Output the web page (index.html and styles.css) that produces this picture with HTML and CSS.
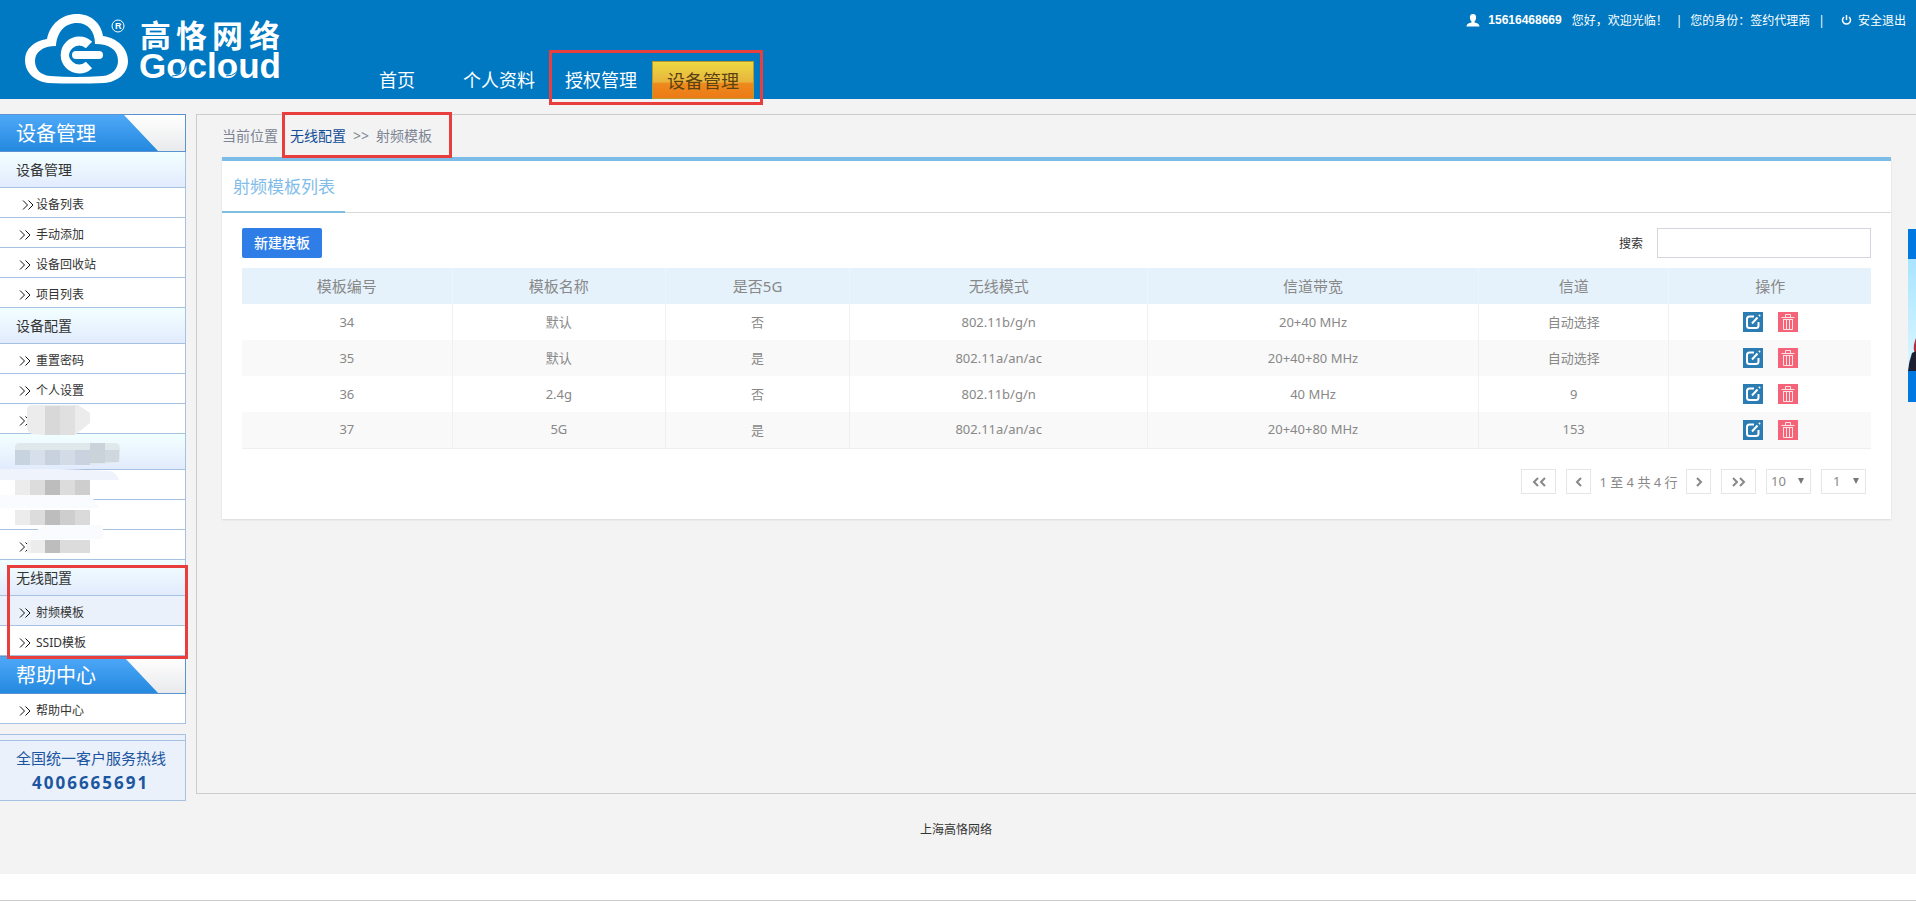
FILE: index.html
```
<!DOCTYPE html>
<html lang="zh-CN">
<head>
    <meta charset="UTF-8">
    <meta name="viewport" content="width=device-width, initial-scale=1.0">
    <title>射频模板 - 设备管理</title>
    <link rel="stylesheet" href="styles.css">
</head>
<body>
    <svg width="0" height="0" class="sprite">
        <symbol id="arrows" viewBox="0 0 12 10">
            <path d="M1 0.5 L5.5 5 L1 9.5 M6.5 0.5 L11 5 L6.5 9.5" fill="none" stroke="currentColor"/>
        </symbol>
        <symbol id="edit" viewBox="0 0 20 20">
            <rect width="20" height="20" fill="#2b7cb3"/>
            <path d="M11 4.5 H6.5 Q4 4.5 4 7 V13.5 Q4 16 6.5 16 H13 Q15.5 16 15.5 13.5 V10" fill="none" stroke="#fff" stroke-width="2"/>
            <path d="M9 11.5 L14.5 5.5 M16 4 L17 3" fill="none" stroke="#fff" stroke-width="2"/>
        </symbol>
        <symbol id="trash" viewBox="0 0 20 20">
            <rect width="20" height="20" fill="#f56379"/>
            <path d="M3.5 5.5 H16.5 M7.5 5 V2.500 H12.5 V5 M5.5 7 V17.5 H14.5 V7 M5.5 7.5 H14.5 M8.5 8 V17 M11.5 8 V17" fill="none" stroke="#fde3e6"/>
        </symbol>
    </svg>

    <div class="wrap">
        <div class="header">
            <svg class="logo" width="270" height="90" viewBox="20 5 270 90">
                <path fill="#fff" fill-rule="evenodd" d="M48 83 C34 81 25 72 25 60 C25 49 34 41 47 39 C50 24 62 14 77 14 C91 14 101 23 103 36 C118 38 128 49 128 61 C128 73 118 82 104 83 Q76 84 48 83 Z M50 76 Q76 78 103 76 C112 75 118 69 118 61 C118 50 110 44 95 44 C95 31 88 23 77 23 C65 23 57 32 56 46 C43 46 35 52 35 61 C35 69 40 75 50 76 Z"/>
                <path d="M89 45 A14 14 0 1 0 89 65" fill="none" stroke="#fff" stroke-width="9"/>
                <path d="M76 55 H99" stroke="#0079c2" stroke-width="14" stroke-linecap="round"/>
                <path d="M76 55 H99" stroke="#fff" stroke-width="8" stroke-linecap="round"/>
                <circle cx="118" cy="26" r="6" fill="none" stroke="#fff"/>
                <text class="logo-mark" x="115" y="29">R</text>
                <text class="logo-cn" x="140 176 212 249" y="47">高恪网络</text>
                <text class="logo-en" x="139" y="78">Gocloud</text>
                <path d="M172 76 Q185 76 186 63 M226 76 Q239 76 240 63" fill="none" stroke="#0079c2"/>
            </svg>
            <div class="nav">
                <a href="#">首页</a>
                <a href="#">个人资料</a>
                <a href="#">授权管理</a>
                <a href="#" class="active">设备管理</a>
                <div class="mark mark-nav"></div>
            </div>
            <div class="user">
                <svg width="14" height="13" viewBox="0 0 14 13"><path fill="#fff" d="M7 0 C9.5 0 10.5 2 10 4.5 C9.8 6 9 7 8.5 7.5 V8.5 C11 9 13.5 10 13.5 12.5 H0.5 C0.5 10 3 9 5.5 8.5 V7.5 C5 7 4.2 6 4 4.5 C3.5 2 4.5 0 7 0 Z"/></svg>
                <b>15616468669</b>
                <span>您好，欢迎光临！</span>
                <span>|</span>
                <span>您的身份：签约代理商</span>
                <span>|</span>
                <a href="#" class="logout">
                    <svg width="11" height="11" viewBox="0 0 11 11"><path d="M3 2 A4 4 0 1 0 8 2 M5.5 0 V5" fill="none" stroke="#fff" stroke-width="1.5"/></svg>
                    安全退出
                </a>
            </div>
        </div>

        <div class="content">
            <div class="sidebar">
                <div class="menu">
                    <h2>设备管理</h2>
                    <h3>设备管理</h3>
                    <a href="#" class="hover"><svg><use href="#arrows"/></svg>设备列表</a>
                    <a href="#"><svg><use href="#arrows"/></svg>手动添加</a>
                    <a href="#"><svg><use href="#arrows"/></svg>设备回收站</a>
                    <a href="#"><svg><use href="#arrows"/></svg>项目列表</a>
                    <h3>设备配置</h3>
                    <a href="#"><svg><use href="#arrows"/></svg>重置密码</a>
                    <a href="#"><svg><use href="#arrows"/></svg>个人设置</a>
                    <div class="hidden-group">
                        <a href="#"><svg><use href="#arrows"/></svg></a>
                        <h3></h3>
                        <a href="#"></a>
                        <a href="#"></a>
                        <a href="#"><svg><use href="#arrows"/></svg></a>
                        <!-- mosaic over the private entries -->
                        <svg class="mosaic" width="120" height="156" viewBox="0 0 120 156">
                            <path d="M27 6 Q27 1 33 1 H78 L90 9 V19 L76 30 Q50 32 32 30 Q26 28 27 20 Z" fill="#ececec"/>
                            <rect x="45" y="2" width="15" height="29" fill="#d8d8d8"/>
                            <rect x="60" y="2" width="15" height="29" fill="#e0e0e0"/>
                            <path d="M15 43 Q15 39 20 39 H115 Q120 39 120 45 V54 Q120 59 112 59 L90 61 H15 Z" fill="#dfe8ea"/>
                            <rect x="15" y="46" width="15" height="15" fill="#c7d3df"/>
                            <rect x="30" y="46" width="15" height="15" fill="#d7dfea"/>
                            <rect x="45" y="46" width="15" height="15" fill="#c8d2df"/>
                            <rect x="60" y="46" width="15" height="15" fill="#d3dbe6"/>
                            <rect x="75" y="46" width="15" height="15" fill="#c9d2de"/>
                            <rect x="90" y="39" width="15" height="20" fill="#cbd3da"/>
                            <rect x="105" y="46" width="14" height="12" fill="#cfd8df"/>
                            <path d="M0 65 H60 L110 67 Q117 69 119 76 H0 Z" fill="#eff3fc"/>
                            <path d="M0 91 H90 L100 104 H0 Z M44 121 H103 V135 H25 Z" fill="#fafbff"/>
                            <path d="M15 76 H30 V91 H15 Z M15 106 H30 V121 H15 Z M30 136 H45 V149 H30 Z" fill="#ececec"/>
                            <path d="M30 76 H45 V91 H30 Z M60 76 H75 V91 H60 Z M30 106 H45 V121 H30 Z M60 136 H90 V149 H60 Z" fill="#dcdcdc"/>
                            <path d="M45 76 H60 V91 H45 Z M45 106 H60 V121 H45 Z M45 136 H60 V149 H45 Z" fill="#bdbdbd"/>
                            <path d="M75 76 H90 V91 H75 Z M60 106 H75 V121 H60 Z" fill="#cecece"/>
                            <rect x="75" y="106" width="15" height="15" fill="#dadada"/>
                            <rect x="27" y="136" width="4" height="13" fill="#f2f2f2"/>
                        </svg>
                    </div>
                    <div class="wifi-group">
                        <h3>无线配置</h3>
                        <a href="#" class="current"><svg><use href="#arrows"/></svg>射频模板</a>
                        <a href="#"><svg><use href="#arrows"/></svg>SSID模板</a>
                        <div class="mark mark-wifi"></div>
                    </div>
                    <h2>帮助中心</h2>
                    <a href="#"><svg><use href="#arrows"/></svg>帮助中心</a>
                </div>
                <div class="hotline">
                    <p>全国统一客户服务热线</p>
                    <strong>4006665691</strong>
                </div>
            </div>

            <div class="main">
                <div class="crumb">
                    <span>当前位置</span>
                    <div class="crumb-path">
                        <a href="#">无线配置</a>
                        <span>&gt;&gt;</span>
                        <span>射频模板</span>
                        <div class="mark mark-crumb"></div>
                    </div>
                </div>

                <div class="card">
                    <div class="tabs"><div class="tab">射频模板列表</div></div>
                    <div class="card-body">
                        <div class="toolbar">
                            <button class="btn-new">新建模板</button>
                            <div class="search">
                                <label for="search">搜索</label>
                                <input type="text" id="search">
                            </div>
                        </div>

                        <table>
                            <colgroup>
                                <col class="c-id"><col class="c-name"><col class="c-5g"><col class="c-mode"><col class="c-width"><col class="c-channel"><col>
                            </colgroup>
                            <thead>
                                <tr><th>模板编号</th><th>模板名称</th><th>是否5G</th><th>无线模式</th><th>信道带宽</th><th>信道</th><th>操作</th></tr>
                            </thead>
                            <tbody>
                                <tr>
                                    <td>34</td><td>默认</td><td>否</td><td>802.11b/g/n</td><td>20+40 MHz</td><td>自动选择</td>
                                    <td class="ops"><div class="actions"><button aria-label="编辑"><svg><use href="#edit"/></svg></button><button aria-label="删除"><svg><use href="#trash"/></svg></button></div></td>
                                </tr>
                                <tr>
                                    <td>35</td><td>默认</td><td>是</td><td>802.11a/an/ac</td><td>20+40+80 MHz</td><td>自动选择</td>
                                    <td class="ops"><div class="actions"><button aria-label="编辑"><svg><use href="#edit"/></svg></button><button aria-label="删除"><svg><use href="#trash"/></svg></button></div></td>
                                </tr>
                                <tr>
                                    <td>36</td><td>2.4g</td><td>否</td><td>802.11b/g/n</td><td>40 MHz</td><td>9</td>
                                    <td class="ops"><div class="actions"><button aria-label="编辑"><svg><use href="#edit"/></svg></button><button aria-label="删除"><svg><use href="#trash"/></svg></button></div></td>
                                </tr>
                                <tr>
                                    <td>37</td><td>5G</td><td>是</td><td>802.11a/an/ac</td><td>20+40+80 MHz</td><td>153</td>
                                    <td class="ops"><div class="actions"><button aria-label="编辑"><svg><use href="#edit"/></svg></button><button aria-label="删除"><svg><use href="#trash"/></svg></button></div></td>
                                </tr>
                            </tbody>
                        </table>

                        <div class="pager">
                            <button class="wide" aria-label="首页"><svg width="14" height="10" viewBox="0 0 14 10"><path d="M6 1 L2 5 L6 9 M13 1 L9 5 L13 9"/></svg></button>
                            <button aria-label="上一页"><svg width="8" height="10" viewBox="0 0 8 10"><path d="M6 1 L2 5 L6 9"/></svg></button>
                            <span class="info">1 至 4 共 4 行</span>
                            <button aria-label="下一页"><svg width="8" height="10" viewBox="0 0 8 10"><path d="M2 1 L6 5 L2 9"/></svg></button>
                            <button class="wide" aria-label="末页"><svg width="14" height="10" viewBox="0 0 14 10"><path d="M1 1 L5 5 L1 9 M8 1 L12 5 L8 9"/></svg></button>
                            <span class="select"><select aria-label="每页行数"><option>10</option></select></span>
                            <span class="select page-no"><select aria-label="页码"><option>1</option></select></span>
                        </div>
                    </div>
                </div>
            </div>
        </div>

        <div class="footer">上海高恪网络</div>
    </div>
    <div class="bottom-line"></div>

    <svg class="service" width="8" height="173" viewBox="0 0 8 173">
        <defs>
            <linearGradient id="sky" x1="0" y1="0" x2="0" y2="1">
                <stop offset="0" stop-color="#a9e4ff"/>
                <stop offset="1" stop-color="#dcf7ff"/>
            </linearGradient>
        </defs>
        <rect width="8" height="173" fill="#0078e0"/>
        <rect y="30" width="8" height="112" fill="url(#sky)"/>
        <path d="M8 109 Q5 116 6 122 L8 124 Z" fill="#b03040"/>
        <path d="M8 122 L4 124 Q1 132 0 142 H8 Z" fill="#1d1f33"/>
    </svg>
</body>
</html>
```
FILE: styles.css
```
* {
    margin: 0;
    padding: 0;
    box-sizing: border-box;
}
body {
    font-family: "Noto Sans", "Noto Sans CJK SC", sans-serif;
    font-size: 12px;
    color: #333;
    background: #fff;
}
a {
    text-decoration: none;
    color: inherit;
}
svg {
    flex: none;
}
.sprite {
    position: absolute;
}
.wrap {
    background: #f3f3f3;
}

/* header */
.header {
    display: flex;
    align-items: flex-end;
    height: 99px;
    background: #0079c2;
    color: #fff;
}
.logo {
    margin: 0 56px 4px 20px;
    fill: #fff;
}
.logo-mark {
    font: bold 9px "Liberation Sans", sans-serif;
}
.logo-cn {
    font: bold 31px "Noto Sans CJK SC", sans-serif;
}
.logo-en {
    font: bold 35px "Liberation Sans", sans-serif;
}
.nav {
    position: relative;
    display: flex;
}
.nav a {
    width: 102px;
    height: 38px;
    line-height: 38px;
    font-size: 18px;
    text-align: center;
}
.nav .active {
    color: #5a4212;
    background: linear-gradient(#ecd943, #e9b43c 55%, #ee8a1c 60%, #ec7a17);
    border: 1px solid #b99a2c;
}
.mark {
    position: absolute;
    border: 3px solid #e83e3e;
    pointer-events: none;
}
.mark-nav {
    left: 203px;
    right: -9px;
    top: -11px;
    bottom: -6px;
}
.user {
    display: flex;
    align-items: center;
    align-self: flex-start;
    gap: 8px;
    height: 40px;
    margin-left: auto;
    padding-right: 10px;
    white-space: nowrap;
}
.user b {
    margin-right: 2px;
    font-family: "Liberation Sans", sans-serif;
}
.logout {
    display: flex;
    align-items: center;
    gap: 6px;
    margin-left: 8px;
}

/* layout */
.content {
    display: flex;
    align-items: flex-start;
    gap: 10px;
    padding-top: 15px;
}

/* sidebar */
.sidebar {
    width: 186px;
    flex: none;
}
.menu {
    background: #fff;
    border-right: 1px solid #a6c1e2;
}
.menu h2 {
    position: relative;
    height: 38px;
    margin-right: -1px;
    padding-left: 16px;
    line-height: 38px;
    font-size: 20px;
    font-weight: normal;
    color: #fff;
    background: linear-gradient(#fff, #e9eaec);
    border: 1px solid #5a93cf;
    border-left: 0;
    z-index: 0;
}
.menu h2::before {
    content: "";
    position: absolute;
    z-index: -1;
    left: 0;
    top: 0;
    width: 158px;
    height: 100%;
    background: linear-gradient(#4ea8f8, #2489df);
    clip-path: polygon(0 0, 124px 0, 100% 100%, 0 100%);
}
.menu h3 {
    height: 36px;
    padding-left: 16px;
    line-height: 36px;
    font-size: 14px;
    font-weight: normal;
    background: linear-gradient(#f2ffff, #e2ebfd);
    border-bottom: 1px solid #a6c1e2;
}
.menu a {
    display: flex;
    align-items: center;
    gap: 5px;
    height: 30px;
    padding: 2px 0 0 19px;
    border-bottom: 1px solid #a6c1e2;
}
.menu a svg {
    width: 12px;
    height: 10px;
    margin-top: 2px;
    color: #111;
}
.menu .hover {
    padding-left: 22px;
    gap: 2px;
}
.menu .current {
    background: #eaf1fb;
}
.hidden-group,
.wifi-group {
    position: relative;
}
.mosaic {
    position: absolute;
    left: 0;
    top: 0;
}
.mark-wifi {
    left: 7px;
    right: -3px;
    top: 5px;
    bottom: -3px;
    z-index: 1;
}
.hotline {
    height: 67px;
    margin-top: 10px;
    padding-top: 5px;
    background: #eaf1fb;
    border: 1px solid #a6c1e2;
    border-left: 0;
    color: #1c55a0;
}
.hotline p {
    padding: 5px 0 0 16px;
    border-top: 1px solid #a6c1e2;
    font-size: 15px;
    line-height: 24px;
}
.hotline strong {
    display: block;
    padding-left: 32px;
    font-size: 17px;
    line-height: 26px;
    letter-spacing: 2px;
}

/* main */
.main {
    flex: 1;
    min-width: 0;
    min-height: 680px;
    padding: 0 25px;
    border: 1px solid #ccc;
    border-right: 0;
}
.crumb {
    display: flex;
    align-items: center;
    gap: 12px;
    height: 42px;
    padding-bottom: 2px;
    font-size: 14px;
    color: #7c8594;
}
.crumb-path {
    position: relative;
    display: flex;
    align-items: center;
    gap: 7px;
}
.crumb-path a {
    color: #124e97;
}
.mark-crumb {
    left: -8px;
    right: -20px;
    top: -13px;
    bottom: -13px;
}
.card {
    background: #fff;
    border-top: 4px solid #7cbce8;
    box-shadow: 0 1px 2px rgba(0, 0, 0, 0.1);
}
.tabs {
    display: flex;
    height: 52px;
    border-bottom: 1px solid #d6d9dc;
}
.tab {
    height: 52px;
    padding: 0 10px 0 11px;
    line-height: 52px;
    font-size: 17px;
    color: #82bdea;
    border-bottom: 2px solid #7cbfe0;
}
.card-body {
    padding: 15px 20px 25px;
}
.toolbar {
    display: flex;
    justify-content: space-between;
    margin-bottom: 10px;
}
.btn-new {
    width: 80px;
    height: 30px;
    padding-bottom: 2px;
    font: 500 14px "Noto Sans CJK SC", sans-serif;
    color: #fff;
    background: #2f7de6;
    border: 0;
    border-radius: 2px;
    cursor: pointer;
}
.search {
    display: flex;
    align-items: center;
    gap: 14px;
}
.search input {
    width: 214px;
    height: 30px;
    padding: 0 8px;
    border: 1px solid #d5d5e0;
}
table {
    width: 100%;
    table-layout: fixed;
    border-collapse: collapse;
    border-bottom: 1px solid #eee;
    text-align: center;
    color: #888;
}
.c-id { width: 12.9%; }
.c-name { width: 13.1%; }
.c-5g { width: 11.3%; }
.c-mode { width: 18.3%; }
.c-width { width: 20.3%; }
.c-channel { width: 11.7%; }
th {
    height: 36px;
    padding-bottom: 2px;
    font-size: 15px;
    font-weight: normal;
    background: #e5f2fb;
    border-right: 1px solid #edf5fb;
}
td {
    height: 36px;
    padding-bottom: 1px;
    font-size: 13px;
    border-right: 1px solid #f0f0f0;
}
th:last-child,
td:last-child {
    border-right: 0;
}
.ops {
    padding: 0;
}
tbody tr:nth-child(even) {
    background: #f9f9f9;
}
.actions {
    display: flex;
    justify-content: center;
    gap: 15px;
}
.actions button {
    width: 20px;
    height: 20px;
    background: none;
    border: 0;
    cursor: pointer;
}
.actions svg {
    display: block;
    width: 20px;
    height: 20px;
}
.pager {
    display: flex;
    justify-content: flex-end;
    align-items: center;
    gap: 10px;
    margin-top: 20px;
    padding-right: 5px;
    font-size: 13px;
    color: #888;
}
.pager button {
    display: flex;
    align-items: center;
    justify-content: center;
    width: 25px;
    height: 25px;
    padding-top: 2px;
    background: #fff;
    border: 1px solid #e6e6e6;
}
.pager .wide {
    width: 35px;
}
.pager path {
    fill: none;
    stroke: #888;
    stroke-width: 2;
}
.info {
    display: flex;
    justify-content: center;
    width: 75px;
    white-space: nowrap;
}
.select {
    position: relative;
}
.select select {
    display: block;
    width: 45px;
    height: 25px;
    padding-left: 4px;
    appearance: none;
    font: 13px "Noto Sans", sans-serif;
    color: #888;
    background: #fff;
    border: 1px solid #e6e6e6;
    border-radius: 0;
}
.page-no select {
    padding-left: 11px;
}
.select::after {
    content: "";
    position: absolute;
    right: 7px;
    top: 9px;
    border: 3px solid transparent;
    border-top: 6px solid #777;
    border-bottom: 0;
}

/* footer */
.footer {
    height: 73px;
    padding: 18px 4px 0 0;
    line-height: 22px;
    text-align: center;
}
.bottom-line {
    height: 27px;
    border-bottom: 1px solid #ccc;
}
.service {
    position: fixed;
    right: 0;
    top: 229px;
}
```
